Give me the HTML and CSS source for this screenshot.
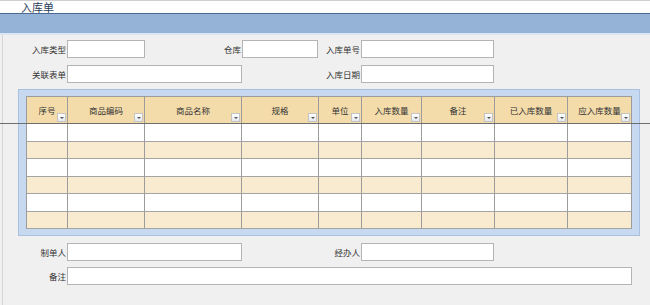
FILE: index.html
```html
<!DOCTYPE html>
<html lang="zh">
<head>
<meta charset="utf-8">
<title>入库单</title>
<link rel="stylesheet" href="styles.css">
</head>
<body>
<div class="page">
  <div class="titlebar">入库单</div>
  <div class="band"></div>
  <div class="content">
    <div class="row">
      <label class="lbl w64">入库类型</label><span class="inp w78"></span>
      <label class="lbl w97">仓库</label><span class="inp w76"></span>
      <label class="lbl w43">入库单号</label><span class="inp w133"></span>
    </div>
    <div class="row">
      <label class="lbl w64">关联表单</label><span class="inp w175"></span>
      <label class="lbl w119">入库日期</label><span class="inp w133"></span>
    </div>

    <div class="gridbox">
      <div class="grid">
        <div class="hd">序号<i class="dd"></i></div>
        <div class="hd">商品编码<i class="dd"></i></div>
        <div class="hd">商品名称<i class="dd"></i></div>
        <div class="hd">规格<i class="dd"></i></div>
        <div class="hd">单位<i class="dd"></i></div>
        <div class="hd">入库数量<i class="dd"></i></div>
        <div class="hd">备注<i class="dd"></i></div>
        <div class="hd">已入库数量<i class="dd"></i></div>
        <div class="hd">应入库数量<i class="dd"></i></div>

        <div class="c"></div><div class="c"></div><div class="c"></div><div class="c"></div><div class="c"></div><div class="c"></div><div class="c"></div><div class="c"></div><div class="c"></div>
        <div class="c alt"></div><div class="c alt"></div><div class="c alt"></div><div class="c alt"></div><div class="c alt"></div><div class="c alt"></div><div class="c alt"></div><div class="c alt"></div><div class="c alt"></div>
        <div class="c"></div><div class="c"></div><div class="c"></div><div class="c"></div><div class="c"></div><div class="c"></div><div class="c"></div><div class="c"></div><div class="c"></div>
        <div class="c alt"></div><div class="c alt"></div><div class="c alt"></div><div class="c alt"></div><div class="c alt"></div><div class="c alt"></div><div class="c alt"></div><div class="c alt"></div><div class="c alt"></div>
        <div class="c"></div><div class="c"></div><div class="c"></div><div class="c"></div><div class="c"></div><div class="c"></div><div class="c"></div><div class="c"></div><div class="c"></div>
        <div class="c alt"></div><div class="c alt"></div><div class="c alt"></div><div class="c alt"></div><div class="c alt"></div><div class="c alt"></div><div class="c alt"></div><div class="c alt"></div><div class="c alt"></div>
      </div>
    </div>

    <div class="row row-b1">
      <label class="lbl w64">制单人</label><span class="inp w175"></span>
      <label class="lbl w119">经办人</label><span class="inp w133"></span>
    </div>
    <div class="row">
      <label class="lbl w64">备注</label><span class="inp w565"></span>
    </div>
  </div>
  <div class="hline"></div>
</div>
</body>
</html>
```

FILE: styles.css
```css
html, body {
  margin: 0;
  padding: 0;
  background: #f0f0f0;
}
body {
  font-family: "Noto Sans CJK SC", "Noto Sans", sans-serif;
  color: #333;
}
.page {
  position: relative;
  width: 650px;
  height: 305px;
  overflow: hidden;
  background: #f0f0f0;
}
.titlebar {
  height: 12px;
  border-top: 1px solid #cfcfcf;
  background: #fff;
  padding-left: 21px;
  font-size: 11px;
  line-height: 12px;
  color: #2c3e5a;
}
.band {
  height: 19px;
  border-top: 1px solid #4a6a92;
  border-bottom: 2px solid #dce6f2;
  background: #95b3d7;
}
.content {
  margin-left: 2px;
  border-left: 1px solid #d6d6d6;
  padding-top: 5px;
  height: 265px;
}
.row {
  display: flex;
  height: 18px;
  margin-bottom: 7px;
}
.row-b1 {
  margin-bottom: 6px;
}
.lbl {
  box-sizing: border-box;
  text-align: right;
  padding-right: 1px;
  font-size: 8.5px;
  line-height: 18px;
  color: #333;
  white-space: nowrap;
}
.inp {
  box-sizing: border-box;
  height: 18px;
  background: #fff;
  border: 1px solid #b4b4b4;
}
.w43 { width: 43px; }
.w64 { width: 64px; }
.w76 { width: 76px; }
.w78 { width: 78px; }
.w97 { width: 97px; }
.w119 { width: 119px; }
.w133 { width: 133px; }
.w175 { width: 175px; }
.w565 { width: 565px; }

.gridbox {
  margin-left: 15px;
  margin-top: -1px;
  margin-bottom: 7px;
  width: 622px;
  box-sizing: border-box;
  background: #c6d9f1;
  border: 1px solid #a9c1df;
  padding: 6px 8px 6px 7px;
}
.grid {
  display: grid;
  grid-template-columns: 41px 77px 97px 77px 43px 60px 73px 73px 64px;
  grid-template-rows: 27px 18px 17px 18px 17px 18px 17px;
  border-left: 1px solid #9c9c9c;
  border-top: 1px solid #9c9c9c;
  width: 606px;
  box-sizing: border-box;
}
.hd, .c {
  box-sizing: border-box;
  border-right: 1px solid #9c9c9c;
  border-bottom: 1px solid #a4a4a4;
}
.hd {
  position: relative;
  background: #f3dcaa;
  font-size: 8.5px;
  line-height: 26px;
  text-align: center;
  color: #333;
  white-space: nowrap;
  border-bottom-color: #707070;
}
.c { background: #fff; }
.c.alt { background: #f8ebcf; }
.dd {
  position: absolute;
  right: 1px;
  bottom: 1px;
  width: 9px;
  height: 9px;
  box-sizing: border-box;
  border: 1px solid #c4c4c4;
  background: linear-gradient(#ffffff, #e4e8ee);
}
.dd::after {
  content: "";
  position: absolute;
  left: 2px;
  top: 3px;
  border-left: 2px solid transparent;
  border-right: 2px solid transparent;
  border-top: 2px solid #555;
}
.hline {
  position: absolute;
  left: 0;
  top: 123px;
  width: 650px;
  height: 1px;
  background: #6e6e6e;
}
```
